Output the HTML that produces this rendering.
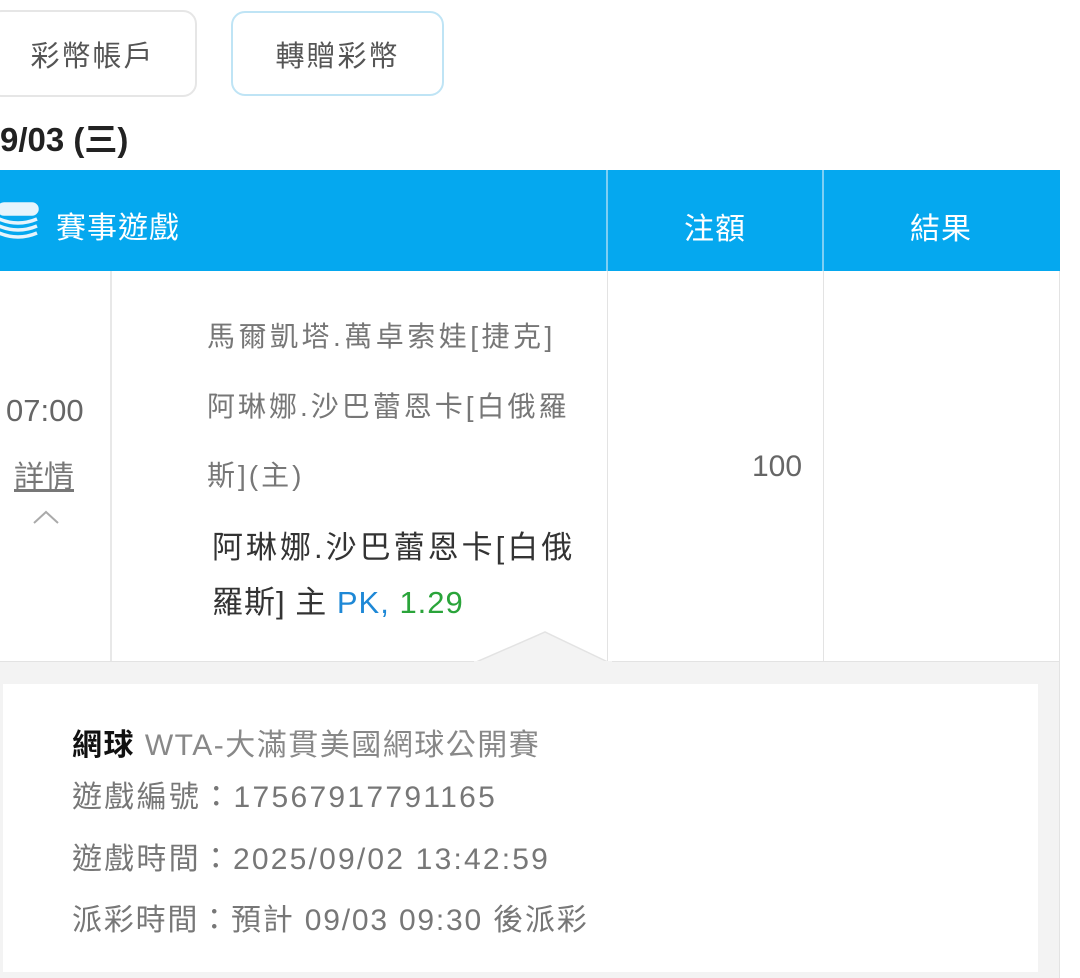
<!DOCTYPE html>
<html><head><meta charset="utf-8"><style>
*{margin:0;padding:0;box-sizing:border-box}
body{width:1080px;height:978px;background:#fff;position:relative;overflow:hidden;font-family:"Liberation Sans","Noto Sans CJK TC",sans-serif;}
.a{position:absolute;white-space:nowrap}
.btn{position:absolute;border-radius:14px;font-size:29px;letter-spacing:2px;color:#555;display:flex;align-items:center;justify-content:center}
</style></head><body>
<div class="btn" style="left:-12px;top:10px;width:209px;height:87px;border:2px solid #e6e6e6;">彩幣帳戶</div>
<div class="btn" style="left:231px;top:11px;width:213px;height:85px;border:2px solid #bfe4f5;">轉贈彩幣</div>
<div class="a" style="left:0;top:113px;font-size:33px;font-weight:bold;color:#222;">9/03 (三)</div>

<div class="a" style="left:0;top:170px;width:1060px;height:101px;background:#05a8ef;"></div>
<div class="a" style="left:606px;top:170px;width:2px;height:101px;background:#cde9f7;opacity:.6"></div>
<div class="a" style="left:822px;top:170px;width:2px;height:101px;background:#cde9f7;opacity:.6"></div>
<svg class="a" style="left:-4px;top:202px" width="44" height="40" viewBox="0 0 44 40">
<g fill="none" stroke="#e6f4fc" stroke-width="3.5"><rect x="3" y="2" width="38" height="10" rx="5" fill="#e6f4fc"/>
<path d="M3 17 Q22 25 41 17"/><path d="M3 24 Q22 32 41 24"/><path d="M3 31 Q22 39 41 31"/></g></svg>
<div class="a" style="left:56px;top:203px;font-size:30px;letter-spacing:1px;color:#fff;">賽事遊戲</div>
<div class="a" style="left:684px;top:204px;font-size:30px;letter-spacing:1px;color:#fff;">注額</div>
<div class="a" style="left:910px;top:204px;font-size:30px;letter-spacing:1px;color:#fff;">結果</div>

<div class="a" style="left:110px;top:271px;width:2px;height:390px;background:#e8e8e8"></div>
<div class="a" style="left:607px;top:271px;width:1px;height:390px;background:#e3e3e3"></div>
<div class="a" style="left:823px;top:271px;width:1px;height:390px;background:#e3e3e3"></div>
<div class="a" style="left:1059px;top:271px;width:1px;height:707px;background:#e3e3e3"></div>

<div class="a" style="left:6px;top:393px;font-size:31px;color:#666;">07:00</div>
<div class="a" style="left:14px;top:452px;font-size:30px;color:#777;text-decoration:underline;">詳情</div>
<svg class="a" style="left:32px;top:508px" width="28" height="18"><path d="M2 15 L14 4 L26 15" fill="none" stroke="#aaa" stroke-width="2"/></svg>

<div class="a" style="left:207px;top:319px;font-size:28px;letter-spacing:3.5px;color:#777;line-height:36px">馬爾凱塔.萬卓索娃[捷克]</div>
<div class="a" style="left:207px;top:389px;font-size:28px;letter-spacing:3px;color:#777;line-height:36px">阿琳娜.沙巴蕾恩卡[白俄羅</div>
<div class="a" style="left:207px;top:458px;font-size:28px;letter-spacing:3px;color:#777;line-height:36px">斯](主)</div>
<div class="a" style="left:212px;top:529px;font-size:31px;letter-spacing:3px;color:#333;line-height:38px">阿琳娜.沙巴蕾恩卡[白俄</div>
<div class="a" style="left:212px;top:584px;font-size:31px;letter-spacing:1px;color:#333;line-height:38px">羅斯] 主 <span style="color:#1e88d6">PK,</span> <span style="color:#2aa43a">1.29</span></div>
<div class="a" style="left:752px;top:450px;font-size:30px;color:#666;">100</div>

<div class="a" style="left:0;top:661px;width:1059px;height:317px;background:#f3f3f3;border-top:1px solid #e3e3e3"></div>
<svg class="a" style="left:474px;top:630px" width="138" height="34"><path d="M0 33 L71 2 L136 33 Z" fill="#f3f3f3" stroke="#e3e3e3" stroke-width="1.5"/><rect x="0" y="31" width="138" height="4" fill="#f3f3f3"/></svg>
<div class="a" style="left:3px;top:684px;width:1035px;height:288px;background:#fff"></div>

<div class="a" style="left:72px;top:720px;font-size:30px;letter-spacing:1.5px;color:#888;"><b style="color:#111">網球</b> WTA-大滿貫美國網球公開賽</div>
<div class="a" style="left:72px;top:772px;font-size:30px;letter-spacing:2.3px;color:#777;">遊戲編號：17567917791165</div>
<div class="a" style="left:72px;top:834px;font-size:30px;letter-spacing:2.2px;color:#777;">遊戲時間：2025/09/02 13:42:59</div>
<div class="a" style="left:72px;top:895px;font-size:30px;letter-spacing:1.8px;color:#777;">派彩時間：預計 09/03 09:30 後派彩</div>
</body></html>
